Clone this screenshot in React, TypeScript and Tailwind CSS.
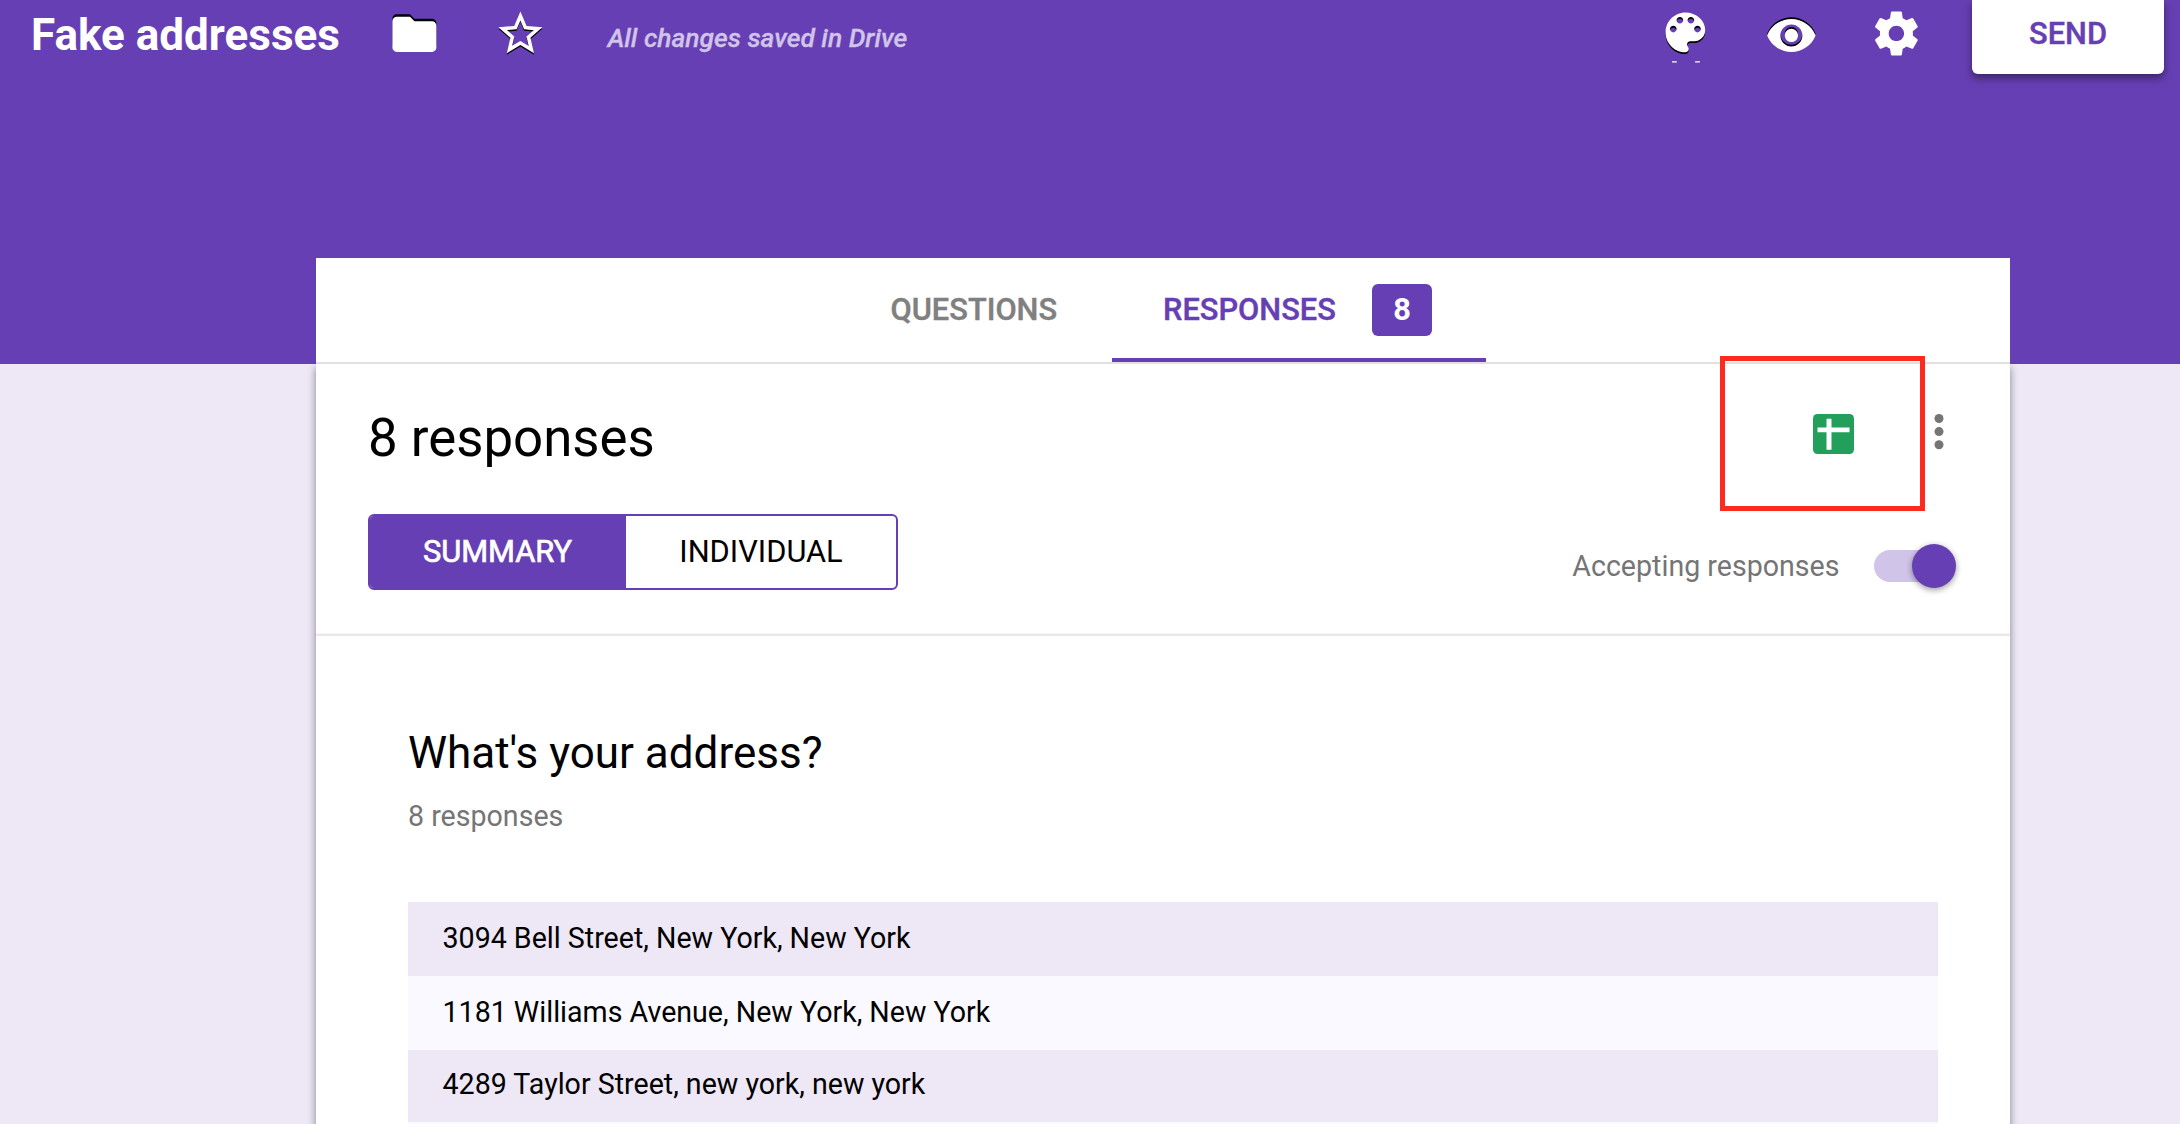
import React from "react";

const FOLDER = "M10 4H4c-1.1 0-1.99.9-1.99 2L2 18c0 1.1.9 2 2 2h16c1.1 0 2-.9 2-2V8c0-1.1-.9-2-2-2h-8l-2-2z";
const STAR =
  "M22 9.24l-7.19-.62L12 2 9.19 8.63 2 9.24l5.46 4.73L5.82 21 12 17.27 18.18 21l-1.63-7.03L22 9.24zM12 15.4l-3.76 2.27 1-4.28-3.32-2.88 4.38-.38L12 6.1l1.71 4.04 4.38.38-3.32 2.88 1 4.28L12 15.4z";
const PALETTE =
  "M12 3c-4.97 0-9 4.03-9 9s4.03 9 9 9c.83 0 1.5-.67 1.5-1.5 0-.39-.15-.74-.39-1.01-.23-.26-.38-.61-.38-.99 0-.83.67-1.5 1.5-1.5H16c2.76 0 5-2.24 5-5 0-4.42-4.03-8-9-8zm-5.5 9c-.83 0-1.5-.67-1.5-1.5S5.67 9 6.5 9 8 9.67 8 10.5 7.33 12 6.5 12zm3-4C8.67 8 8 7.33 8 6.5S8.67 5 9.5 5s1.5.67 1.5 1.5S10.33 8 9.5 8zm5 0c-.83 0-1.5-.67-1.5-1.5S13.67 5 14.5 5s1.5.67 1.5 1.5S15.33 8 14.5 8zm3 4c-.83 0-1.5-.67-1.5-1.5S16.67 9 17.5 9s1.5.67 1.5 1.5-.67 1.5-1.5 1.5z";
const EYE =
  "M12 4.5C7 4.5 2.73 7.61 1 12c1.73 4.39 6 7.5 11 7.5s9.27-3.11 11-7.5c-1.73-4.39-6-7.5-11-7.5zM12 17c-2.76 0-5-2.24-5-5s2.24-5 5-5 5 2.24 5 5-2.24 5-5 5zm0-8c-1.66 0-3 1.34-3 3s1.34 3 3 3 3-1.34 3-3-1.34-3-3-3z";
const GEAR =
  "M19.43 12.98c.04-.32.07-.64.07-.98s-.03-.66-.07-.98l2.11-1.65c.19-.15.24-.42.12-.64l-2-3.46c-.12-.22-.39-.3-.61-.22l-2.49 1c-.52-.4-1.08-.73-1.69-.98l-.38-2.65C14.46 2.18 14.25 2 14 2h-4c-.25 0-.46.18-.49.42l-.38 2.65c-.61.25-1.17.59-1.69.98l-2.49-1c-.23-.09-.49 0-.61.22l-2 3.46c-.13.22-.07.49.12.64l2.11 1.65c-.04.32-.07.65-.07.98s.03.66.07.98l-2.11 1.65c-.19.15-.24.42-.12.64l2 3.46c.12.22.39.3.61.22l2.49-1c.52.4 1.08.73 1.69.98l.38 2.65c.03.24.24.42.49.42h4c.25 0 .46-.18.49-.42l.38-2.65c.61-.25 1.17-.59 1.69-.98l2.49 1c.23.09.49 0 .61-.22l2-3.46c.12-.22.07-.49-.12-.64l-2.11-1.65zM12 15.5c-1.93 0-3.5-1.57-3.5-3.5s1.57-3.5 3.5-3.5 3.5 1.57 3.5 3.5-1.57 3.5-3.5 3.5z";

/* White toolbar glyph with a black edge, shifted vertically by `edge` units. */
function BarIcon({ d, edge, className, children }: { d: string; edge: number; className: string; children?: React.ReactNode }) {
  return (
    <svg viewBox="0 0 24 24" className={`size-[52.8px] shrink-0 overflow-visible ${className}`}>
      {edge !== 0 && <path d={d} fill="#000" transform={`translate(0 ${edge})`} />}
      <path d={d} fill="#fff" />
      {children}
    </svg>
  );
}

function TopBar() {
  return (
    <div className="flex h-[258px] items-start justify-between pl-[31px] pr-4">
      <div className="flex items-start">
        <h1 className="w-[356.5px] text-[44px] font-bold leading-[70px] text-white">Fake addresses</h1>
        <BarIcon d={FOLDER} edge={-1.15} className="mt-[7.7px]" />
        <BarIcon d={STAR} edge={0.65} className="ml-[53.4px] mt-[6.9px]" />
        <p className="ml-[60.9px] text-[26.4px] font-medium italic leading-[77px] text-[#d1c4e9] [-webkit-text-stroke:0.3px_#d1c4e9]">
          All changes saved in Drive
        </p>
      </div>
      <div className="flex items-start">
        <BarIcon d={PALETTE} edge={0.85} className="mt-[5.6px]">
          <path d="M5.9 25.1h2.2v.6H5.9zM16.4 25.1h2.2v.6h-2.2z" fill="#fff" />
        </BarIcon>
        <BarIcon d={EYE} edge={-0.8} className="ml-[53.2px] mt-[8.6px]" />
        <BarIcon d={GEAR} edge={0} className="ml-[52.3px] mt-[6.9px]" />
        <button className="ml-[49.2px] h-[74px] w-48 rounded-b-md bg-white pb-[7px] text-[30.8px] font-medium leading-[67px] text-[#673fb4] shadow-[0_4px_8px_rgba(0,0,0,0.45)] [-webkit-text-stroke:0.4px_#673fb4]">
          SEND
        </button>
      </div>
    </div>
  );
}

function Tabs() {
  return (
    <nav className="ml-[316px] mr-[170px] flex h-[106px] border-b-2 border-[#e0e0e0] bg-white pl-[522px] text-[30.8px] font-medium leading-[103px]">
      <div className="w-[274px] pl-[52.5px] text-[#808080] [-webkit-text-stroke:0.4px_#808080]">QUESTIONS</div>
      <div className="flex w-[374px] items-start border-b-4 border-[#673fb4] pl-[51px] text-[#673fb4]">
        <span className="w-[209px] [-webkit-text-stroke:0.4px_#673fb4]">RESPONSES</span>
        <span className="mt-[26px] h-[52px] w-[60px] rounded-md bg-[#673fb4] text-center font-bold leading-[51px] text-white">8</span>
      </div>
    </nav>
  );
}

function Overview() {
  return (
    <section className="flex h-[272px] justify-between border-b-2 border-[#e8e8e8] pl-[52px] pr-[54px] shadow-[inset_0_-2px_2px_-1px_rgba(0,0,0,0.04)]">
      <div>
        <h2 className="mt-[38px] text-[52.8px] leading-[72px] text-black">8 responses</h2>
        <div className="mt-10 flex h-[76px] w-[530px] overflow-hidden rounded-md border-2 border-[#673fb4] text-center text-[30.8px] leading-[71px]">
          <span className="w-64 bg-[#673fb4] pr-px text-white [-webkit-text-stroke:0.7px_white]">SUMMARY</span>
          <span className="flex-1 text-black">INDIVIDUAL</span>
        </div>
      </div>
      <div className="flex flex-col items-end">
        <div className="mt-[50px] flex items-start gap-[80.5px] pr-[12px]">
          <div className="relative">
            <svg viewBox="0 0 41 40" className="h-10 w-[41px]">
              <rect width="41" height="40" rx="4.5" fill="#219f5b" />
              <path d="M13.5 4.7h5v31h-5z M4.5 13.6h32v4.6h-32z" fill="#fff" />
            </svg>
            <div className="absolute left-[-93px] top-[-58px] z-20 h-[154.5px] w-[205px] border-[5px] border-[#ff2a1f]" />
          </div>
          <svg viewBox="0 0 10 38" className="h-[38px] w-[10px]">
            <g fill="#757575">
              <circle cx="5" cy="4.5" r="4.5" />
              <circle cx="5" cy="17.6" r="4.5" />
              <circle cx="5" cy="30.8" r="4.5" />
            </g>
          </svg>
        </div>
        <div className="mt-[90px] flex h-11 items-center">
          <span className="text-[28.6px] leading-[44px] text-[#757575]">Accepting responses</span>
          <div className="ml-[34.5px] flex h-8 w-[82px] items-center justify-end rounded-full bg-gradient-to-r from-[#d1c4e9] from-85% to-transparent to-85%">
            <span className="size-11 shrink-0 rounded-full bg-[#673fb4] shadow-[0_2px_6px_rgba(0,0,0,0.4)]" />
          </div>
        </div>
      </div>
    </section>
  );
}

function Answers() {
  return (
    <section className="pl-[92px] pr-[72px] pt-[87px]">
      <h3 className="text-[44px] leading-[60px] text-black">What&apos;s your address?</h3>
      <p className="mt-[13px] text-[28.6px] leading-[40px] text-[#757575]">8 responses</p>
      <ul className="mt-[66px] text-[28.6px] text-black">
        <li className="h-[74px] bg-[#ede7f6] pl-[34.5px] leading-[72px]">3094 Bell Street, New York, New York</li>
        <li className="h-[74px] bg-[#faf9ff] pl-[34.5px] leading-[72px]">1181 Williams Avenue, New York, New York</li>
        <li className="h-[72px] bg-[#ede7f6] pl-[34.5px] leading-[68px]">4289 Taylor Street, new york, new york</li>
        <li className="h-[2px] bg-[#faf9ff]" />
      </ul>
    </section>
  );
}

export default function App() {
  return (
    <div className="h-[1124px] w-[2180px] overflow-hidden bg-[#ede7f6] font-['Roboto',sans-serif]">
      <header className="relative z-10 h-[364px] bg-[#673fb4]">
        <TopBar />
        <Tabs />
      </header>
      <main className="ml-[316px] mr-[170px] h-[780px] bg-white shadow-[0_4px_8px_rgba(0,0,0,0.45)]">
        <Overview />
        <Answers />
      </main>
    </div>
  );
}
